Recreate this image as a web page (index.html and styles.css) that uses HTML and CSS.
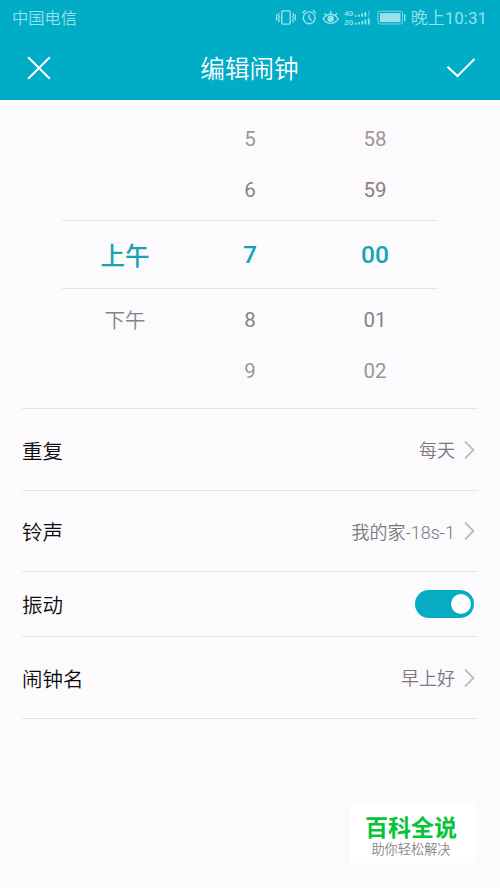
FILE: index.html
```html
<!DOCTYPE html>
<html lang="zh-CN">
<head>
<meta charset="utf-8">
<title>编辑闹钟</title>
<link rel="stylesheet" href="styles.css">
</head>
<body>
<div class="screen">
  <header class="header">
    <div class="status">
      <span class="carrier">中国电信</span>
      <svg class="status-icons" width="132" height="20" viewBox="0 0 132 20" fill="none" stroke="currentColor" stroke-width="1.4">
        <rect x="6.8" y="2.9" width="8.4" height="13.2" rx="1"/>
        <path d="M4.3 5l-1.2 1.6 1.4 2-1.4 2 1.4 2-1.2 1.6M1.6 6.5v6M17.7 5l1.2 1.6-1.4 2 1.4 2-1.4 2 1.2 1.6M20.4 6.5v6" stroke-width="1.2"/>
        <circle cx="34.2" cy="9.8" r="5.9"/>
        <path d="M34 6.3v3.7l2.6 2.4M27.2 5.3l3.4-3M41.2 5.3l-3.4-3"/>
        <path d="M48.2 10.8c2.2-3.2 4.6-4.5 7.5-4.5s5.3 1.3 7.5 4.5c-2.2 3.2-4.6 4.6-7.5 4.6s-5.3-1.4-7.5-4.6zM49.4 5.3l2 2.2M55.7 2.8v3M62 5.3l-2 2.2"/>
        <circle cx="55.7" cy="10.8" r="2.6" fill="currentColor"/>
        <g class="net-label"><text x="69.2" y="8.4">4G</text><text x="69.2" y="16.8">2G</text></g>
        <path d="M80.8 7.2v1.6M84 6.5v2.3M87.2 5.2v3.6M90.4 3.9v4.9M80.8 14.8v1.6M84 14.1v2.3M87.2 12.8v3.6M90.4 11.5v4.9M93.8 10.2v6.2" stroke-width="1.8"/>
        <path d="M93.8 2.6v6.2" stroke-width="1.6" opacity=".4"/>
        <rect x="103" y="3.2" width="24.5" height="12.8" rx="2" stroke-width="1" opacity=".8"/>
        <rect x="105" y="5.1" width="20.5" height="9" fill="currentColor" stroke="none"/>
        <path d="M129.7 6.3v7" stroke-width="1.4"/>
      </svg>
      <span class="clock">晚上<span class="latin">10:31</span></span>
    </div>
    <div class="titlebar">
      <svg width="24" height="24" viewBox="0 0 24 24" class="action"><path d="M1.2 1.2l21.6 21.6M22.8 1.2L1.2 22.8"/></svg>
      <h1 class="title">编辑闹钟</h1>
      <svg width="30" height="22" viewBox="0 0 30 22" class="action"><path d="M1.5 9.8l10 9.2L28.5 2"/></svg>
    </div>
  </header>

  <main>
    <section class="picker">
      <div class="row edge"><span></span><span>5</span><span>58</span></div>
      <div class="row"><span></span><span>6</span><span>59</span></div>
      <div class="row selected"><span>上午</span><span>7</span><span>00</span></div>
      <div class="row"><span>下午</span><span>8</span><span>01</span></div>
      <div class="row edge"><span></span><span>9</span><span>02</span></div>
    </section>

    <section class="settings">
      <div class="item">
        <span class="label">重复</span><span class="value">每天</span>
        <svg class="chevron" width="11" height="20" viewBox="0 0 11 20"><path d="M1 1.5l8.5 8.5L1 18.5"/></svg>
      </div>
      <div class="item ringtone">
        <span class="label">铃声</span><span class="value">我的家-18s-1</span>
        <svg class="chevron" width="11" height="20" viewBox="0 0 11 20"><path d="M1 1.5l8.5 8.5L1 18.5"/></svg>
      </div>
      <div class="item compact">
        <span class="label">振动</span><span class="toggle"><span class="knob"></span></span>
      </div>
      <div class="item">
        <span class="label">闹钟名</span><span class="value">早上好</span>
        <svg class="chevron" width="11" height="20" viewBox="0 0 11 20"><path d="M1 1.5l8.5 8.5L1 18.5"/></svg>
      </div>
    </section>
  </main>

  <aside class="badge">
    <strong class="badge-name">百科全说</strong>
    <span class="badge-tag">助你轻松解决</span>
  </aside>
</div>
</body>
</html>
```
FILE: styles.css
```css
* { box-sizing: border-box; }

body {
  margin: 0;
  background: #fcfafd;
  font-family: Roboto, "Noto Sans CJK SC", sans-serif;
  font-weight: 350;
}

.screen {
  position: relative;
  width: 500px;
  height: 888px;
  overflow: hidden;
}

.latin { font-weight: 400; }

.header {
  height: 100px;
  background: #00acc6;
  color: #fff;
}

.status {
  display: flex;
  align-items: center;
  height: 35px;
  padding: 0 13px 0 12px;
  color: #96e1ec;
  font-size: 16.3px;
}

.carrier { padding-bottom: 2px; }
.status-icons { margin-left: auto; }
.net-label {
  fill: currentColor;
  stroke: none;
  font-family: "Liberation Sans", sans-serif;
  font-size: 7px;
  font-weight: 700;
}
.clock {
  margin-left: 4px;
  padding-bottom: 2px;
  font-size: 17px;
  white-space: nowrap;
}

.titlebar {
  display: flex;
  align-items: center;
  justify-content: space-between;
  height: 65px;
  padding: 0 24px 0 27px;
}

.title {
  margin: 0;
  padding: 0 0 2px 2px;
  font-size: 24.6px;
  font-weight: 350;
}

.action {
  fill: none;
  stroke: #fff;
  stroke-width: 2;
}

.picker {
  width: 376px;
  height: 308px;
  margin: 0 auto;
  padding-top: 14px;
}

.row {
  display: grid;
  grid-template-columns: repeat(3, 125px);
  align-items: center;
  height: 51px;
  text-align: center;
  font-size: 20.5px;
  font-weight: 400;
  color: #858387;
}

.row span { padding: 0 0 2px 1px; line-height: 30px; }
.row span:first-child { padding-bottom: 0; font-weight: 350; }
.edge { color: #99979b; }

.row.selected {
  height: 69px;
  margin: 4px 0 6px;
  border-top: 1px solid #e5e3e7;
  border-bottom: 1px solid #e5e3e7;
  color: #14a4b2;
  font-size: 24.6px;
  font-weight: 500;
}
.selected span { padding: 1px 0 0 1px; }
.selected span:first-child { padding-top: 4px; font-weight: 500; }

.settings {
  margin: 0 22px;
  border-top: 1px solid #e5e3e7;
}

.item {
  display: flex;
  align-items: center;
  height: 82px;
  padding-right: 3px;
  border-bottom: 1px solid #e5e3e7;
}
.item.ringtone { height: 81px; }
.item.compact { height: 65px; padding-right: 4px; }

.label { font-size: 20.5px; color: #0c0b0d; }
.value { margin-left: auto; padding-bottom: 1px; font-size: 18px; color: #7b797d; }

.chevron {
  margin-left: 9px;
  fill: none;
  stroke: #bdbbc0;
  stroke-width: 1.8;
}

.toggle {
  display: flex;
  align-items: center;
  justify-content: flex-end;
  width: 59px;
  height: 28px;
  margin-left: auto;
  padding-right: 3px;
  border-radius: 14px;
  background: #05acc4;
}
.knob { width: 20px; height: 20px; border-radius: 50%; background: #fff; }

.badge {
  position: absolute;
  left: 350px;
  top: 803px;
  display: flex;
  flex-direction: column;
  align-items: center;
  width: 125px;
  height: 60px;
  padding-top: 12px;
  background: #fff;
}
.badge-name { padding-right: 3px; font-size: 23px; line-height: 27px; font-weight: 700; color: #06c437; }
.badge-tag { padding-right: 3px; font-size: 13.2px; line-height: 15px; font-weight: 350; color: #858585; }
```
